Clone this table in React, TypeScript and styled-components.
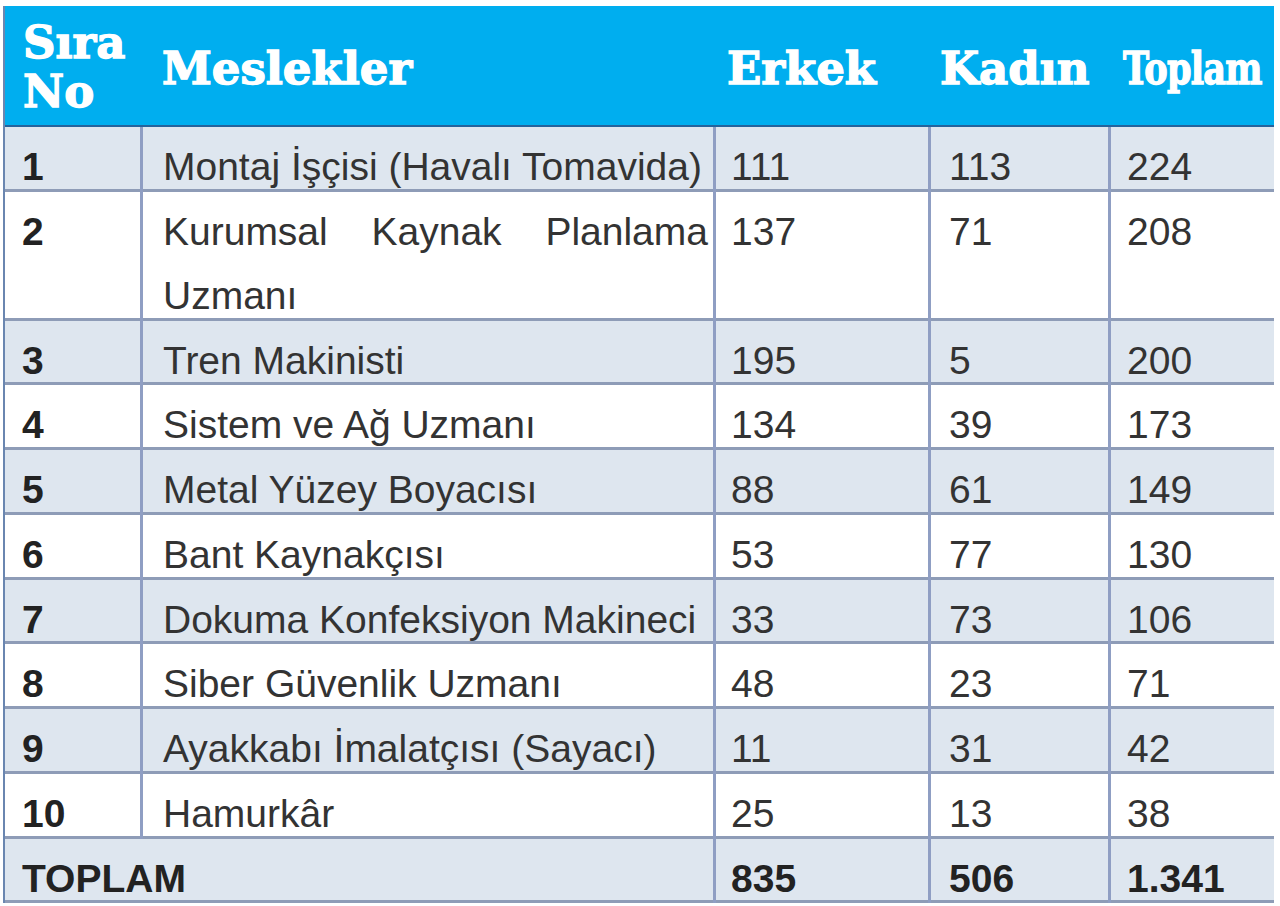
import React from "react";
import styled, { createGlobalStyle } from "styled-components";

const GlobalStyle = createGlobalStyle`
  html, body {
    margin: 0;
    padding: 0;
    background: #ffffff;
  }
  body {
    font-family: "Liberation Sans", Arial, sans-serif;
  }
`;

const COLS = "135px 573px 215px 180px 164px";

const Page = styled.div`
  padding: 6px 0 0 3px;
`;

const Table = styled.div`
  width: 1269px;
  display: flex;
  flex-direction: column;
  border-left: 2px solid #6a86b0;
`;

const HeaderRow = styled.div`
  display: grid;
  grid-template-columns: ${COLS};
  align-items: center;
  height: 119px;
  background: #00aeef;
  border-bottom: 2px solid #25639c;
`;

const HeaderCell = styled.div<{ $pl: number; $stack?: boolean }>`
  padding-left: ${(p) => p.$pl}px;
  padding-top: ${(p) => (p.$stack ? 3 : 6)}px;
  font-family: "DejaVu Serif", "Liberation Serif", serif;
  font-weight: 700;
  font-size: 45px;
  line-height: 49px;
  color: #ffffff;
  -webkit-text-stroke: 1.4px #ffffff;
  white-space: nowrap;
`;

const Narrow = styled.span`
  display: inline-block;
  transform: scaleX(0.78);
  transform-origin: left center;
  letter-spacing: -1px;
`;

const Row = styled.div<{ $shade: boolean }>`
  display: grid;
  grid-template-columns: ${COLS};
  background: ${(p) => (p.$shade ? "#dee6ef" : "#ffffff")};
  border-bottom: 3px solid #8e9cb7;
`;

const Cell = styled.div<{ $pl: number; $line?: boolean; $bold?: boolean; $span?: number; $wrap?: boolean }>`
  grid-column: span ${(p) => p.$span ?? 1};
  padding: 8px 5px 0 ${(p) => p.$pl}px;
  margin-bottom: -10.25px;
  border-left: ${(p) => (p.$line ? "3px solid #8f9ec3" : "none")};
  font-family: "Liberation Sans", Arial, sans-serif;
  font-size: 39px;
  line-height: 64px;
  font-weight: ${(p) => (p.$bold ? 700 : 400)};
  color: ${(p) => (p.$bold ? "#222222" : "#333333")};
  text-align: ${(p) => (p.$wrap ? "justify" : "left")};
  white-space: ${(p) => (p.$wrap ? "normal" : "nowrap")};
`;

type Item = { no: string; name: string; m: string; f: string; t: string; wrap?: boolean };

const rows: Item[] = [
  { no: "1", name: "Montaj İşçisi (Havalı Tomavida)", m: "111", f: "113", t: "224" },
  { no: "2", name: "Kurumsal Kaynak Planlama Uzmanı", m: "137", f: "71", t: "208", wrap: true },
  { no: "3", name: "Tren Makinisti", m: "195", f: "5", t: "200" },
  { no: "4", name: "Sistem ve Ağ Uzmanı", m: "134", f: "39", t: "173" },
  { no: "5", name: "Metal Yüzey Boyacısı", m: "88", f: "61", t: "149" },
  { no: "6", name: "Bant Kaynakçısı", m: "53", f: "77", t: "130" },
  { no: "7", name: "Dokuma Konfeksiyon Makineci", m: "33", f: "73", t: "106" },
  { no: "8", name: "Siber Güvenlik Uzmanı", m: "48", f: "23", t: "71" },
  { no: "9", name: "Ayakkabı İmalatçısı (Sayacı)", m: "11", f: "31", t: "42" },
  { no: "10", name: "Hamurkâr", m: "25", f: "13", t: "38" },
];

export default function App() {
  return (
    <Page>
      <GlobalStyle />
      <Table>
        <HeaderRow>
          <HeaderCell $pl={18} $stack>
            Sıra
            <br />
            No
          </HeaderCell>
          <HeaderCell $pl={22}>Meslekler</HeaderCell>
          <HeaderCell $pl={14}>Erkek</HeaderCell>
          <HeaderCell $pl={12}>Kadın</HeaderCell>
          <HeaderCell $pl={15}>
            <Narrow>Toplam</Narrow>
          </HeaderCell>
        </HeaderRow>
        {rows.map((r, i) => (
          <Row key={r.no} $shade={i % 2 === 0}>
            <Cell $pl={17} $bold>
              {r.no}
            </Cell>
            <Cell $pl={20} $line $wrap={r.wrap}>
              {r.name}
            </Cell>
            <Cell $pl={15} $line>
              {r.m}
            </Cell>
            <Cell $pl={18} $line>
              {r.f}
            </Cell>
            <Cell $pl={16} $line>
              {r.t}
            </Cell>
          </Row>
        ))}
        <Row $shade>
          <Cell $pl={17} $bold $span={2}>
            TOPLAM
          </Cell>
          <Cell $pl={15} $line $bold>
            835
          </Cell>
          <Cell $pl={18} $line $bold>
            506
          </Cell>
          <Cell $pl={16} $line $bold>
            1.341
          </Cell>
        </Row>
      </Table>
    </Page>
  );
}
